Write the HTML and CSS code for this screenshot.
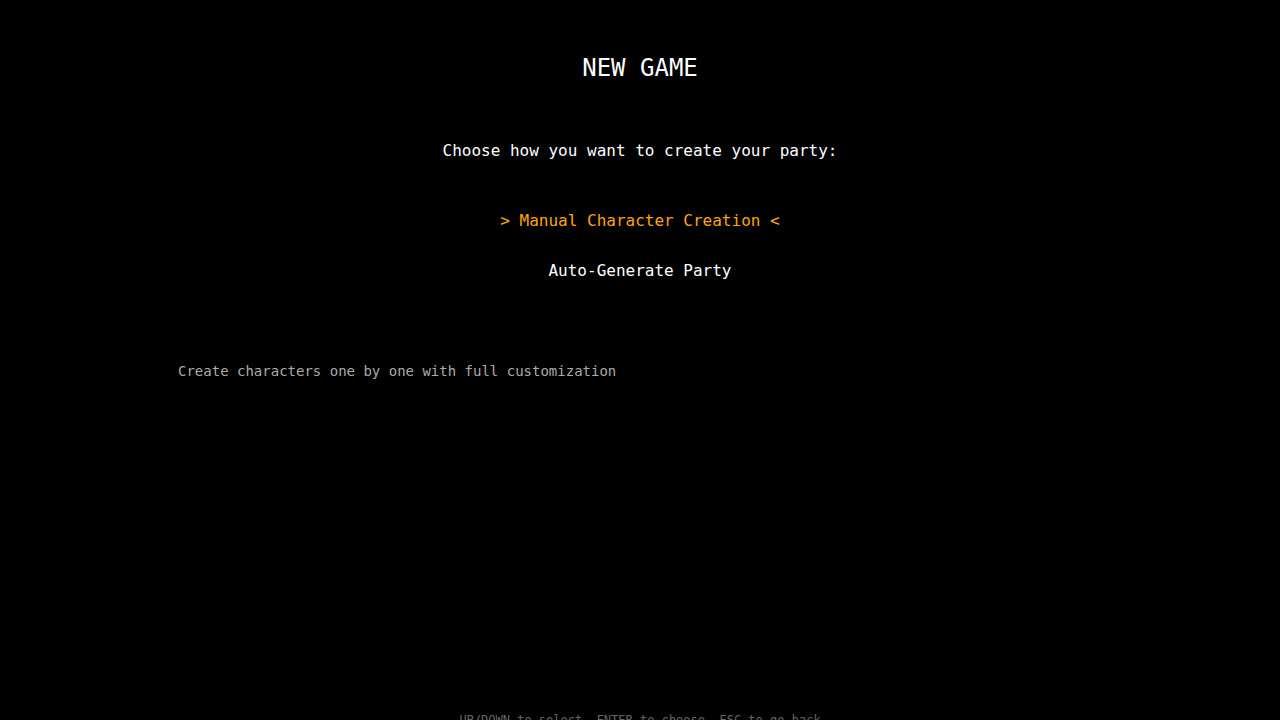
FILE: index.html
```
<!DOCTYPE html>
<html lang="en">
<head>
<meta charset="utf-8">
<title>New Game</title>
<link rel="stylesheet" href="styles.css">
</head>
<body>
<main class="screen">
  <h1 class="title">NEW GAME</h1>
  <p class="prompt">Choose how you want to create your party:</p>
  <div class="menu">
    <button type="button" class="option selected">&gt; Manual Character Creation &lt;</button>
    <button type="button" class="option">Auto-Generate Party</button>
  </div>
  <p class="description">Create characters one by one with full customization</p>
  <footer class="help">UP/DOWN to select, ENTER to choose, ESC to go back</footer>
</main>
</body>
</html>
```

FILE: styles.css
```
* { box-sizing: border-box; }
body {
  margin: 0;
  background: #000;
  color: #fff;
  font-family: Menlo, "DejaVu Sans Mono", monospace;
  overflow: hidden;
}
.screen {
  display: flex;
  flex-direction: column;
  align-items: center;
  padding-top: 53px;
}
.title {
  margin: 0 0 58px;
  font-size: 24px;
  line-height: 30px;
  font-weight: 400;
}
.prompt {
  margin: 0 0 50px;
  font-size: 16px;
  line-height: 20px;
}
.menu {
  display: flex;
  flex-direction: column;
  align-items: center;
  gap: 30px;
}
.option {
  border: 0;
  padding: 0;
  background: none;
  color: #fff;
  font: inherit;
  font-size: 16px;
  line-height: 20px;
}
.selected { color: #ffa500; }
.description {
  margin: 80px 0 0;
  width: 100%;
  padding-left: 178px;
  font-size: 14px;
  line-height: 20px;
  color: #aaa;
}
.help {
  margin-top: 329px;
  font-size: 12px;
  line-height: 20px;
  color: #666;
}
```
